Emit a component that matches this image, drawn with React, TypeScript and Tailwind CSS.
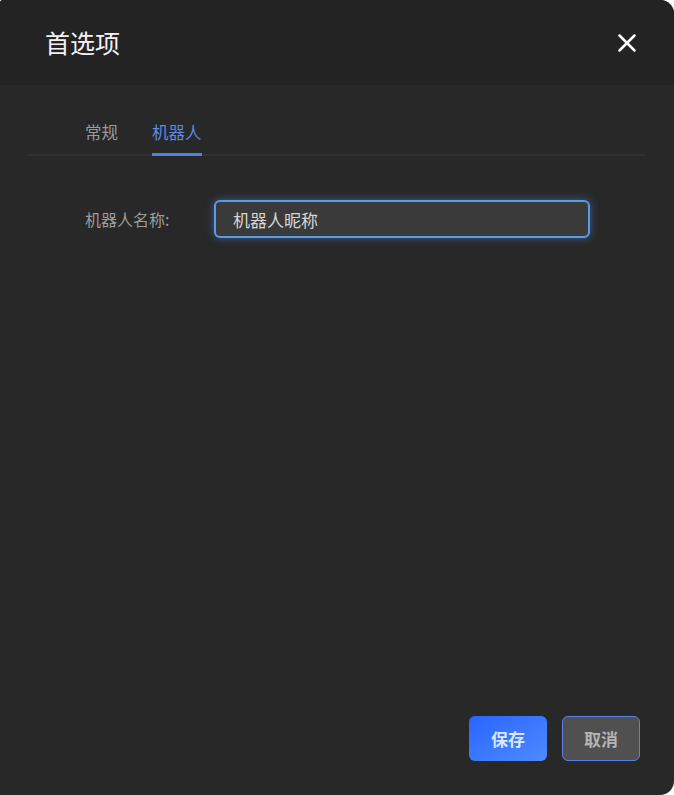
import { X } from "lucide-react"

const font = { fontFamily: '"Noto Sans CJK SC", "Noto Sans", sans-serif' }

export default function App() {
  return (
    <div className="w-[674px] h-[795px] bg-white" style={font}>
      <div className="flex h-full flex-col overflow-hidden rounded-tl-[3px] rounded-tr-[14px] rounded-br-[14px] bg-[#282828]">
        {/* header */}
        <div className="flex h-[85px] shrink-0 items-center justify-between bg-[#232323] pl-[45px] pr-[32px]">
          <h1 className="text-[25px] font-normal text-[#f2f2f2]">首选项</h1>
          <button className="text-white">
            <X size={30} strokeWidth={2} />
          </button>
        </div>

        {/* tabs */}
        <div className="mx-[28px] mt-[35px] flex gap-[34px] border-b-2 border-[#303030] pl-[57px]">
          <div className="pb-[10px] text-[16.5px] leading-[24px] text-[#9a9a9a]">常规</div>
          <div className="-mb-[2px] border-b-[3px] border-[#4f7fe6] pb-[8px] text-[16.5px] leading-[24px] text-[#5b8ae8]">
            机器人
          </div>
        </div>

        {/* form */}
        <div className="mt-[44px] flex items-center pl-[85px]">
          <label className="w-[129px] text-[16px] text-[#9c9c9c]">机器人名称:</label>
          <input
            defaultValue="机器人昵称"
            className="h-[38px] w-[376px] rounded-[6px] border-2 border-[#5a9be8] bg-[#3a3a3a] px-[17px] text-[17px] text-[#d6d6d6] shadow-[0_0_8px_rgba(70,140,230,0.55)] outline-none"
            style={font}
          />
        </div>

        <div className="flex-1" />

        {/* footer */}
        <div className="flex justify-end gap-[15px] pb-[34px] pr-[34px]">
          <button className="h-[45px] w-[78px] rounded-[6px] bg-gradient-to-br from-[#2a64ff] to-[#4e8aff] text-[17px] font-bold text-[#dbe6ff]">
            保存
          </button>
          <button className="h-[45px] w-[78px] rounded-[6px] border-[1.5px] border-[#5a82e6] bg-[#505050] text-[17px] font-bold text-[#b4b4b4]">
            取消
          </button>
        </div>
      </div>
    </div>
  )
}
